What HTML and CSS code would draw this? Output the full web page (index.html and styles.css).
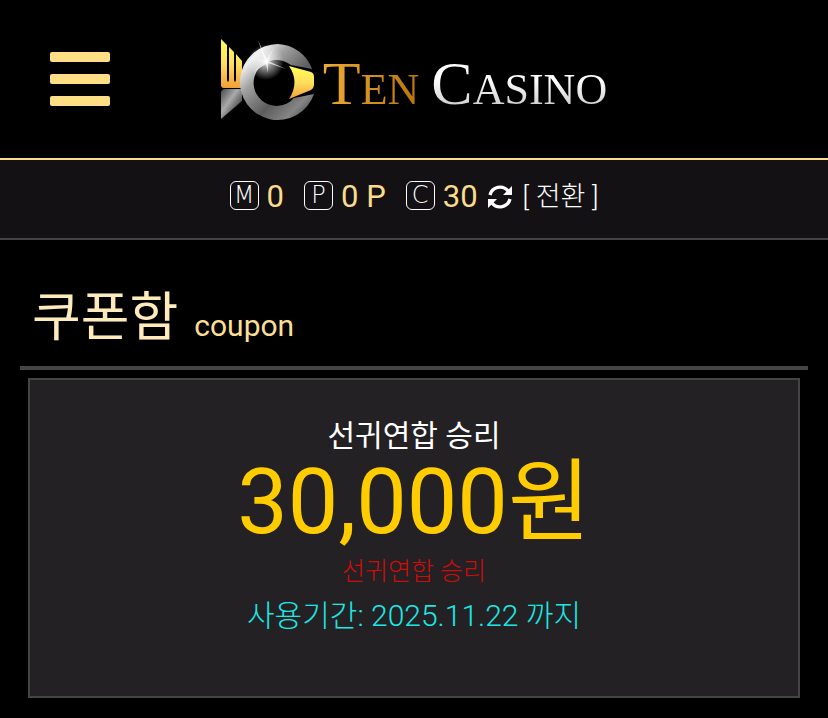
FILE: index.html
```html
<!DOCTYPE html>
<html lang="ko">
<head>
    <meta charset="UTF-8">
    <meta name="viewport" content="width=device-width, initial-scale=1.0">
    <title>Ten Casino</title>
    <link rel="stylesheet" href="styles.css">
</head>
<body>
<header class="header">
    <button class="menu-btn" type="button" aria-label="메뉴">
        <span class="bar"></span>
        <span class="bar"></span>
        <span class="bar"></span>
    </button>
    <a class="logo" href="#">
        <svg class="logo-mark" width="94" height="90" viewBox="7 0 94 90" aria-hidden="true">
            <defs>
                <linearGradient id="gold" x1="0" y1="0" x2="0" y2="1">
                    <stop offset="0" stop-color="#ffff50"/>
                    <stop offset="0.5" stop-color="#ffdf60"/>
                    <stop offset="1" stop-color="#f3a035"/>
                </linearGradient>
                <linearGradient id="steel" x1="0" y1="0" x2="1" y2="1">
                    <stop offset="0" stop-color="#b8b8b8"/>
                    <stop offset="0.18" stop-color="#eeeeee"/>
                    <stop offset="0.34" stop-color="#a0a0a0"/>
                    <stop offset="0.6" stop-color="#5c5c5c"/>
                    <stop offset="0.8" stop-color="#858585"/>
                    <stop offset="1" stop-color="#303030"/>
                </linearGradient>
                <linearGradient id="fin" x1="0" y1="0" x2="1" y2="1">
                    <stop offset="0" stop-color="#484848"/>
                    <stop offset="0.4" stop-color="#aaaaaa"/>
                    <stop offset="0.7" stop-color="#555555"/>
                    <stop offset="1" stop-color="#999999"/>
                </linearGradient>
                <radialGradient id="glow">
                    <stop offset="0" stop-color="#ffffff"/>
                    <stop offset="0.3" stop-color="#ffffff" stop-opacity="0.6"/>
                    <stop offset="1" stop-color="#ffffff" stop-opacity="0"/>
                </radialGradient>
            </defs>
            <path fill="url(#gold)" d="M7 5 13 11V45Q13 48 14 48Q15 48 15 45V13L20 18V45Q20 48 21 48Q22 48 22 45V20L28 27V54H10Q7 54 7 51Z"/>
            <path fill="url(#fin)" d="M7 58Q8 55 11 55H28V67L7 85Z"/>
            <path fill="url(#steel)" fill-rule="evenodd" d="M64 10A38 38 0 1 0 100 60L80 64A23 23 0 1 1 77 31L98 35A38 38 0 0 0 64 10Z"/>
            <path fill="url(#gold)" d="M75 32 97 38Q100 39 100 43V51Q100 54 97 56L75 65Q86 48 75 32Z"/>
            <circle cx="52" cy="28" r="18" fill="url(#glow)"/>
            <path fill="#ffffff" opacity="0.7" d="M52 28 32 24 51 27 44 6 53 26 60 13 54 27 72 35 54 29 54 39 52 30 39 38Z"/>
        </svg>
        <span class="logo-text"><span class="ten"><b>T</b>EN</span><span class="casino"><b>C</b>ASINO</span></span>
    </a>
</header>

<div class="wallet">
    <span class="balance"><i class="coin">M</i>0</span>
    <span class="balance"><i class="coin">P</i>0 P</span>
    <span class="balance"><i class="coin">C</i>30</span>
    <button class="refresh" type="button" aria-label="새로고침">
        <svg width="26" height="26" viewBox="0 0 26 26" aria-hidden="true">
            <path d="M3 11A10.3 10.3 0 0 1 21 7M23 15A10.3 10.3 0 0 1 5 19" fill="none" stroke="#fff" stroke-width="3.4"/>
            <path d="M25 2V11H16ZM1 24V15H10Z" fill="#fff"/>
        </svg>
    </button>
    <a class="convert" href="#">[ 전환 ]</a>
</div>

<main class="content">
    <h1 class="page-title">쿠폰함 <small>coupon</small></h1>
    <section class="coupon">
        <h2 class="coupon-name">선귀연합 승리</h2>
        <p class="amount">30,000원</p>
        <p class="memo">선귀연합 승리</p>
        <p class="period">사용기간: 2025.11.22 까지</p>
    </section>
</main>
</body>
</html>
```
FILE: styles.css
```css
* {
    box-sizing: border-box;
}
body {
    margin: 0;
    background-color: #000;
    color: #fff;
    font-family: Roboto, "Noto Sans CJK KR", sans-serif;
    font-weight: 300;
}
button {
    padding: 0;
    border: none;
    background: none;
    cursor: pointer;
}
a {
    color: inherit;
    text-decoration: none;
}
h1, h2, p {
    margin: 0;
    font-weight: 300;
}

/* header */
.header {
    display: grid;
    grid-template-columns: 1fr auto 1fr;
    align-items: center;
    height: 160px;
    padding: 0 50px;
    border-bottom: 2px solid #f9dc90;
}
.menu-btn {
    display: flex;
    flex-direction: column;
    gap: 12px;
    width: 60px;
}
.bar {
    height: 10px;
    border-radius: 2px;
    background-color: #fedf86;
}
.logo {
    display: flex;
    align-items: center;
    gap: 8px;
}
.logo-text {
    display: flex;
    align-items: baseline;
    gap: 12px;
    padding-top: 14px;
    font-family: "Liberation Serif", serif;
    font-size: 44px;
    font-weight: 400;
    line-height: 64px;
}
.logo-text b {
    font-size: 62px;
    font-weight: 400;
}
.ten {
    background: linear-gradient(90deg, #efab36, #b87408);
    background-clip: text;
    color: transparent;
}
.casino {
    background: linear-gradient(#fff 40%, #c4c4c4 85%);
    background-clip: text;
    color: transparent;
}

/* balances */
.wallet {
    display: flex;
    justify-content: center;
    align-items: center;
    height: 80px;
    padding-bottom: 4px;
    border-bottom: 2px solid #444;
    background-color: #131113;
}
.balance {
    display: flex;
    align-items: center;
    gap: 8px;
    margin-right: 20px;
    color: #fbdc8a;
    font-size: 31px;
    font-weight: 400;
    line-height: 38px;
}
.balance:nth-child(3) {
    margin-right: 9px;
}
.coin {
    display: flex;
    justify-content: center;
    align-items: center;
    width: 29px;
    height: 29px;
    margin-bottom: 4px;
    border: 1px solid #fff;
    border-radius: 6px;
    color: #fff;
    font-family: "DejaVu Sans", sans-serif;
    font-size: 24px;
    font-style: normal;
    font-weight: 200;
    line-height: 27px;
}
.refresh {
    display: flex;
    margin-right: 10px;
}
.convert {
    font-size: 27px;
    line-height: 38px;
}

/* coupon list */
.content {
    padding: 0 20px 20px;
}
.page-title {
    display: flex;
    align-items: baseline;
    gap: 16px;
    height: 130px;
    padding: 38px 12px 0;
    border-bottom: 4px solid #444;
    color: #fdebbb;
    font-size: 53px;
    font-weight: 400;
    line-height: 80px;
}
.page-title small {
    color: #fbdf96;
    font-size: 30px;
}
.coupon {
    margin: 8px 8px 0;
    padding: 36px 20px 58px;
    border: 2px solid #444;
    background-color: #232123;
    text-align: center;
}
.coupon-name {
    font-size: 30px;
    font-weight: 400;
    line-height: 40px;
}
.amount {
    color: #fc0;
    font-size: 90px;
    font-weight: 400;
    line-height: 94px;
}
.memo {
    color: #d00b0b;
    font-size: 25px;
    line-height: 44px;
}
.period {
    color: #1de8e8;
    font-size: 30px;
    line-height: 44px;
}
```
